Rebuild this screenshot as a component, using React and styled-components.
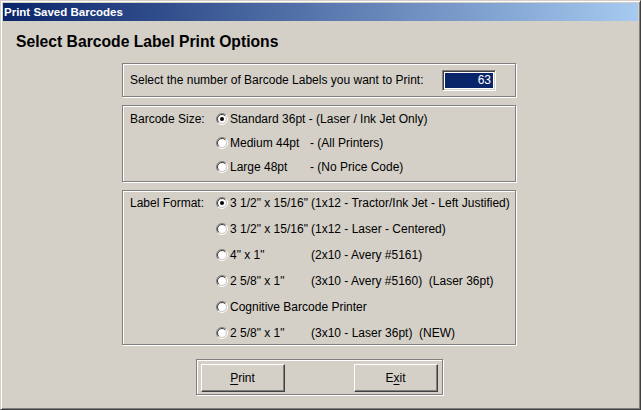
import React from "react";
import styled, { createGlobalStyle } from "styled-components";

const GlobalStyle = createGlobalStyle`
  body {
    margin: 0;
    background: #d4d0c8;
    font-family: "Liberation Sans", Arial, sans-serif;
  }
`;

// Window frame ----------------
const Window = styled.div`
  width: 641px;
  height: 410px;
  box-sizing: border-box;
  background: #d4d0c8;
  border-top: 1px solid #d4d0c8;
  border-left: 1px solid #d4d0c8;
  border-right: 1px solid #404040;
  border-bottom: 1px solid #404040;
  box-shadow: inset 1px 1px 0 #ffffff, inset -1px -1px 0 #808080;
  padding: 2px;
  display: flex;
  flex-direction: column;
`;

const TitleBar = styled.div`
  height: 18px;
  background: linear-gradient(to right, #0a246a, #a6caf0);
  color: #ffffff;
  font-weight: bold;
  font-size: 11.5px;
  line-height: 18px;
  padding-left: 1px;
  white-space: nowrap;
`;

const Heading = styled.h1`
  margin: 11px 0 0 13px;
  font-size: 15.7px;
  line-height: 20px;
  font-weight: bold;
  color: #000;
`;

const Stack = styled.div`
  width: 394px;
  margin: 11px 0 0 119px;
  display: flex;
  flex-direction: column;
  align-items: center;
`;

const GroupBox = styled.div`
  box-sizing: border-box;
  width: ${(p) => p.$width || 394}px;
  border: 1px solid #808080;
  box-shadow: 1px 1px 0 #ffffff, inset 1px 1px 0 #ffffff;
  margin-top: ${(p) => p.$gap || 0}px;
  font-size: 12px;
  color: #000;
`;

const NumberRow = styled.div`
  height: 32px;
  display: flex;
  align-items: center;
  justify-content: space-between;
  padding: 0 19px 0 7px;
`;

const NumberField = styled.div`
  box-sizing: border-box;
  width: 54px;
  height: 21px;
  border-top: 1px solid #808080;
  border-left: 1px solid #808080;
  border-right: 1px solid #ffffff;
  border-bottom: 1px solid #ffffff;
  box-shadow: inset 1px 1px 0 #404040, inset -1px -1px 0 #d4d0c8;
  background: #ffffff;
  padding: 2px;
  display: flex;
`;

const Selected = styled.span`
  flex: 1;
  background: #0a246a;
  color: #ffffff;
  text-align: right;
  padding-right: 2px;
  line-height: 15px;
`;

const OptionGrid = styled.div`
  display: grid;
  grid-template-columns: 86px 1fr;
  grid-auto-rows: 22px;
  row-gap: ${(p) => p.$rowGap}px;
  padding: ${(p) => p.$pad};
  padding-left: 7px;
`;

const GroupLabel = styled.span`
  grid-column: 1;
  display: flex;
  align-items: center;
`;

const Option = styled.label`
  grid-column: 2;
  display: flex;
  align-items: center;
  white-space: pre;
`;

const OptionText = styled.span`
  margin-left: 2px;
  display: flex;
`;

const FirstPart = styled.span`
  display: inline-block;
  width: ${(p) => p.$width}px;
  white-space: pre;
`;

const ButtonBox = styled(GroupBox)`
  display: flex;
  justify-content: space-between;
  padding: 4px 4px 2px;
`;

const Button = styled.button`
  box-sizing: border-box;
  width: 84px;
  height: 28px;
  background: #d4d0c8;
  font-family: "Liberation Sans", Arial, sans-serif;
  font-size: 12px;
  color: #000;
  border-top: 1px solid #ffffff;
  border-left: 1px solid #ffffff;
  border-right: 1px solid #404040;
  border-bottom: 1px solid #404040;
  box-shadow: inset -1px -1px 0 #808080;
  padding: 0;
  cursor: default;

  u {
    text-decoration-thickness: 1px;
    text-underline-offset: 2px;
  }
`;

function Radio({ checked }) {
  return (
    <svg width="12" height="12" viewBox="0 0 12 12">
      <circle cx="6" cy="6" r="4" fill="#ffffff" />
      <path d="M2.1 9.9 A5.5 5.5 0 0 1 9.9 2.1" stroke="#808080" fill="none" />
      <path d="M9.9 2.1 A5.5 5.5 0 0 1 2.1 9.9" stroke="#ffffff" fill="none" />
      <path d="M2.8 9.2 A4.5 4.5 0 0 1 9.2 2.8" stroke="#404040" fill="none" />
      <path d="M9.2 2.8 A4.5 4.5 0 0 1 2.8 9.2" stroke="#d4d0c8" fill="none" />
      {checked && <circle cx="6" cy="6" r="2" fill="#000000" />}
    </svg>
  );
}

const sizes = [
  { first: "Standard 36pt", rest: " - (Laser / Ink Jet Only)", checked: true, plain: true },
  { first: "Medium 44pt", rest: "- (All Printers)" },
  { first: "Large 48pt", rest: "- (No Price Code)" },
];

const formats = [
  { first: '3 1/2" x 15/16"', rest: "(1x12 - Tractor/Ink Jet - Left Justified)", checked: true },
  { first: '3 1/2" x 15/16"', rest: "(1x12 - Laser - Centered)" },
  { first: '4" x 1"', rest: "(2x10 - Avery #5161)" },
  { first: '2 5/8" x 1"', rest: "(3x10 - Avery #5160)  (Laser 36pt)" },
  { first: "Cognitive Barcode Printer", rest: "", plain: true },
  { first: '2 5/8" x 1"', rest: "(3x10 - Laser 36pt)  (NEW)" },
];

function OptionList({ label, items, firstWidth, rowGap, pad }) {
  return (
    <OptionGrid $rowGap={rowGap} $pad={pad}>
      <GroupLabel>{label}</GroupLabel>
      {items.map((item, i) => (
        <Option key={i}>
          <Radio checked={item.checked} />
          <OptionText>
            {item.plain ? (
              item.first + item.rest
            ) : (
              <>
                <FirstPart $width={firstWidth}>{item.first}</FirstPart>
                {item.rest}
              </>
            )}
          </OptionText>
        </Option>
      ))}
    </OptionGrid>
  );
}

export default function App() {
  return (
    <>
      <GlobalStyle />
      <Window>
        <TitleBar>Print Saved Barcodes</TitleBar>
        <Heading>Select Barcode Label Print Options</Heading>
        <Stack>
          <GroupBox>
            <NumberRow>
              <span>Select the number of Barcode Labels you want to Print:</span>
              <NumberField>
                <Selected>63</Selected>
              </NumberField>
            </NumberRow>
          </GroupBox>

          <GroupBox $gap={8}>
            <OptionList
              label="Barcode Size:"
              items={sizes}
              firstWidth={80}
              rowGap={2}
              pad="2px 0 3px"
            />
          </GroupBox>

          <GroupBox $gap={8}>
            <OptionList
              label="Label Format:"
              items={formats}
              firstWidth={81}
              rowGap={4}
              pad="1px 0 0"
            />
          </GroupBox>

          <ButtonBox $width={247} $gap={14}>
            <Button>
              <u>P</u>rint
            </Button>
            <Button>
              E<u>x</u>it
            </Button>
          </ButtonBox>
        </Stack>
      </Window>
    </>
  );
}
